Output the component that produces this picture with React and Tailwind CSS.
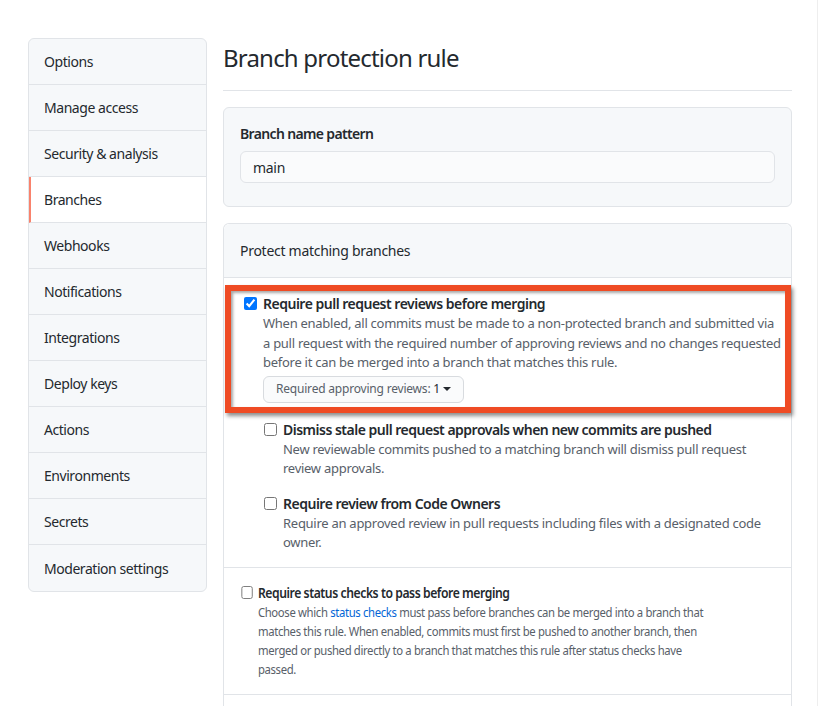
import React from 'react';

const menu = [
  'Options',
  'Manage access',
  'Security & analysis',
  'Branches',
  'Webhooks',
  'Notifications',
  'Integrations',
  'Deploy keys',
  'Actions',
  'Environments',
  'Secrets',
  'Moderation settings',
];

function Sidebar() {
  return (
    <nav className="w-[179px] shrink-0 self-start rounded-md border border-[#e1e4e8] bg-[#f6f8fa] overflow-hidden">
      {menu.map((label, i) => {
        const active = label === 'Branches';
        return (
          <div
            key={label}
            className={`h-[46px] flex items-center text-[14px] tracking-[-0.45px] text-[#24292e] ${i < menu.length - 1 ? 'border-b border-[#e1e4e8]' : ''} ${active ? 'bg-white border-l-2 border-l-[#f9826c] pl-[13px]' : 'pl-[15px]'}`}
          >
            {label}
          </div>
        );
      })}
    </nav>
  );
}

function CheckItem({ checked, title, children, className = '' }) {
  return (
    <div className={`flex items-start ${className}`}>
      <input
        type="checkbox"
        defaultChecked={checked}
        className="mt-[3px] mr-[6px] w-[13px] h-[13px] shrink-0 accent-[#0075ff]"
      />
      <div className="min-w-0">
        <div className="text-[14px] leading-[20px] font-semibold tracking-[-0.5px] text-[#24292e]">{title}</div>
        {children}
      </div>
    </div>
  );
}

const note = 'text-[13px] leading-[19.5px] tracking-[-0.27px] text-[#586069]';

export default function App() {
  return (
    <div className="flex min-h-screen bg-white" style={{ fontFamily: '"Noto Sans", "Open Sans", Arial, sans-serif' }}>
      <div className="w-[817px] shrink-0 flex gap-4 pl-[28px] pt-[38px] pr-[25px]">
        <Sidebar />

        <main className="flex-1 min-w-0">
          {/* HEADING */}
          <div className="pt-[5px] pb-[17px] border-b border-[#e1e4e8]">
            <h2 className="text-[24px] leading-[30px] tracking-[-0.8px] text-[#24292e]">Branch protection rule</h2>
          </div>

          {/* PATTERN */}
          <div className="mt-4 rounded-md border border-[#e1e4e8] bg-[#f6f8fa] px-4 pt-4 pb-[23px]">
            <label className="block text-[14px] leading-[20px] font-semibold tracking-[-0.65px] text-[#24292e]">Branch name pattern</label>
            <div className="mt-[7px] h-[32px] rounded-md border border-[#e1e4e8] bg-[#fafbfc] flex items-center px-3 text-[14px] tracking-[-0.3px] text-[#24292e]">
              main
            </div>
          </div>

          {/* PROTECT */}
          <div className="mt-4 rounded-t-md border border-b-0 border-[#e1e4e8]">
            <div className="bg-[#f6f8fa] border-b border-[#e1e4e8] px-4 pt-4 pb-[15px] text-[14px] leading-[22px] tracking-[-0.28px] text-[#24292e] rounded-t-md">
              Protect matching branches
            </div>

            <div className="relative pl-[20px] pr-[10px] pt-4 pb-[17px]">
              {/* ANNOTATION FRAME */}
              <div className="absolute left-[1px] right-0 top-[7px] bottom-[7px] border-[6px] border-[#ef4b24] shadow-[2px_3px_4px_rgba(0,0,0,0.45),inset_2px_2px_3px_rgba(0,0,0,0.35)] pointer-events-none"></div>

              <CheckItem checked title="Require pull request reviews before merging">
                <p className={note}>
                  When enabled, all commits must be made to a non-protected branch and submitted via a pull request with the required number of approving reviews and no changes requested before it can be merged into a branch that matches this rule.
                </p>
                <button className="mt-[3px] h-[27px] px-3 rounded-md border border-[#d8dbdf] bg-[#fafbfc] text-[12px] tracking-[-0.2px] text-[#586069] flex items-center">
                  Required approving reviews:&nbsp;<span className="text-[#24292e]">1</span>
                  <span className="ml-[3px] w-0 h-0 border-x-[4px] border-x-transparent border-t-[4px] border-t-[#24292e]"></span>
                </button>
              </CheckItem>
            </div>

            <div className="pl-[40px] pr-[12px] pb-[14px] border-b border-[#e1e4e8]">
              <CheckItem title="Dismiss stale pull request approvals when new commits are pushed">
                <p className={note}>
                  New reviewable commits pushed to a matching branch will dismiss pull request review approvals.
                </p>
              </CheckItem>
              <CheckItem className="mt-[15px]" title="Require review from Code Owners">
                <p className={note}>
                  Require an approved review in pull requests including files with a designated code owner.
                </p>
              </CheckItem>
            </div>

            {/* this row is squeezed sideways in the capture */}
            <div className="border-b border-[#e1e4e8]">
              <div className="origin-left scale-x-[0.87] pl-[20px] pr-[6px] pt-[15px] pb-[15px]">
                <CheckItem title="Require status checks to pass before merging">
                  <p className="text-[13px] leading-[19px] tracking-[-0.4px] text-[#586069]">
                    Choose which <a className="text-[#0366d6]">status checks</a> must pass before branches can be merged into a branch that matches this rule. When enabled, commits must first be pushed to another branch, then merged or pushed directly to a branch that matches this rule after status checks have passed.
                  </p>
                </CheckItem>
              </div>
            </div>

            <div className="pl-[20px] pr-[12px] pt-4 pb-4">
              <CheckItem title="Require conversation resolution before merging">
                <p className={note}>
                  When enabled, all conversations on code must be resolved before a pull request can be merged.
                </p>
              </CheckItem>
            </div>
          </div>
        </main>
      </div>
      <div className="flex-1 border-l border-[#eeeeee]"></div>
    </div>
  );
}
